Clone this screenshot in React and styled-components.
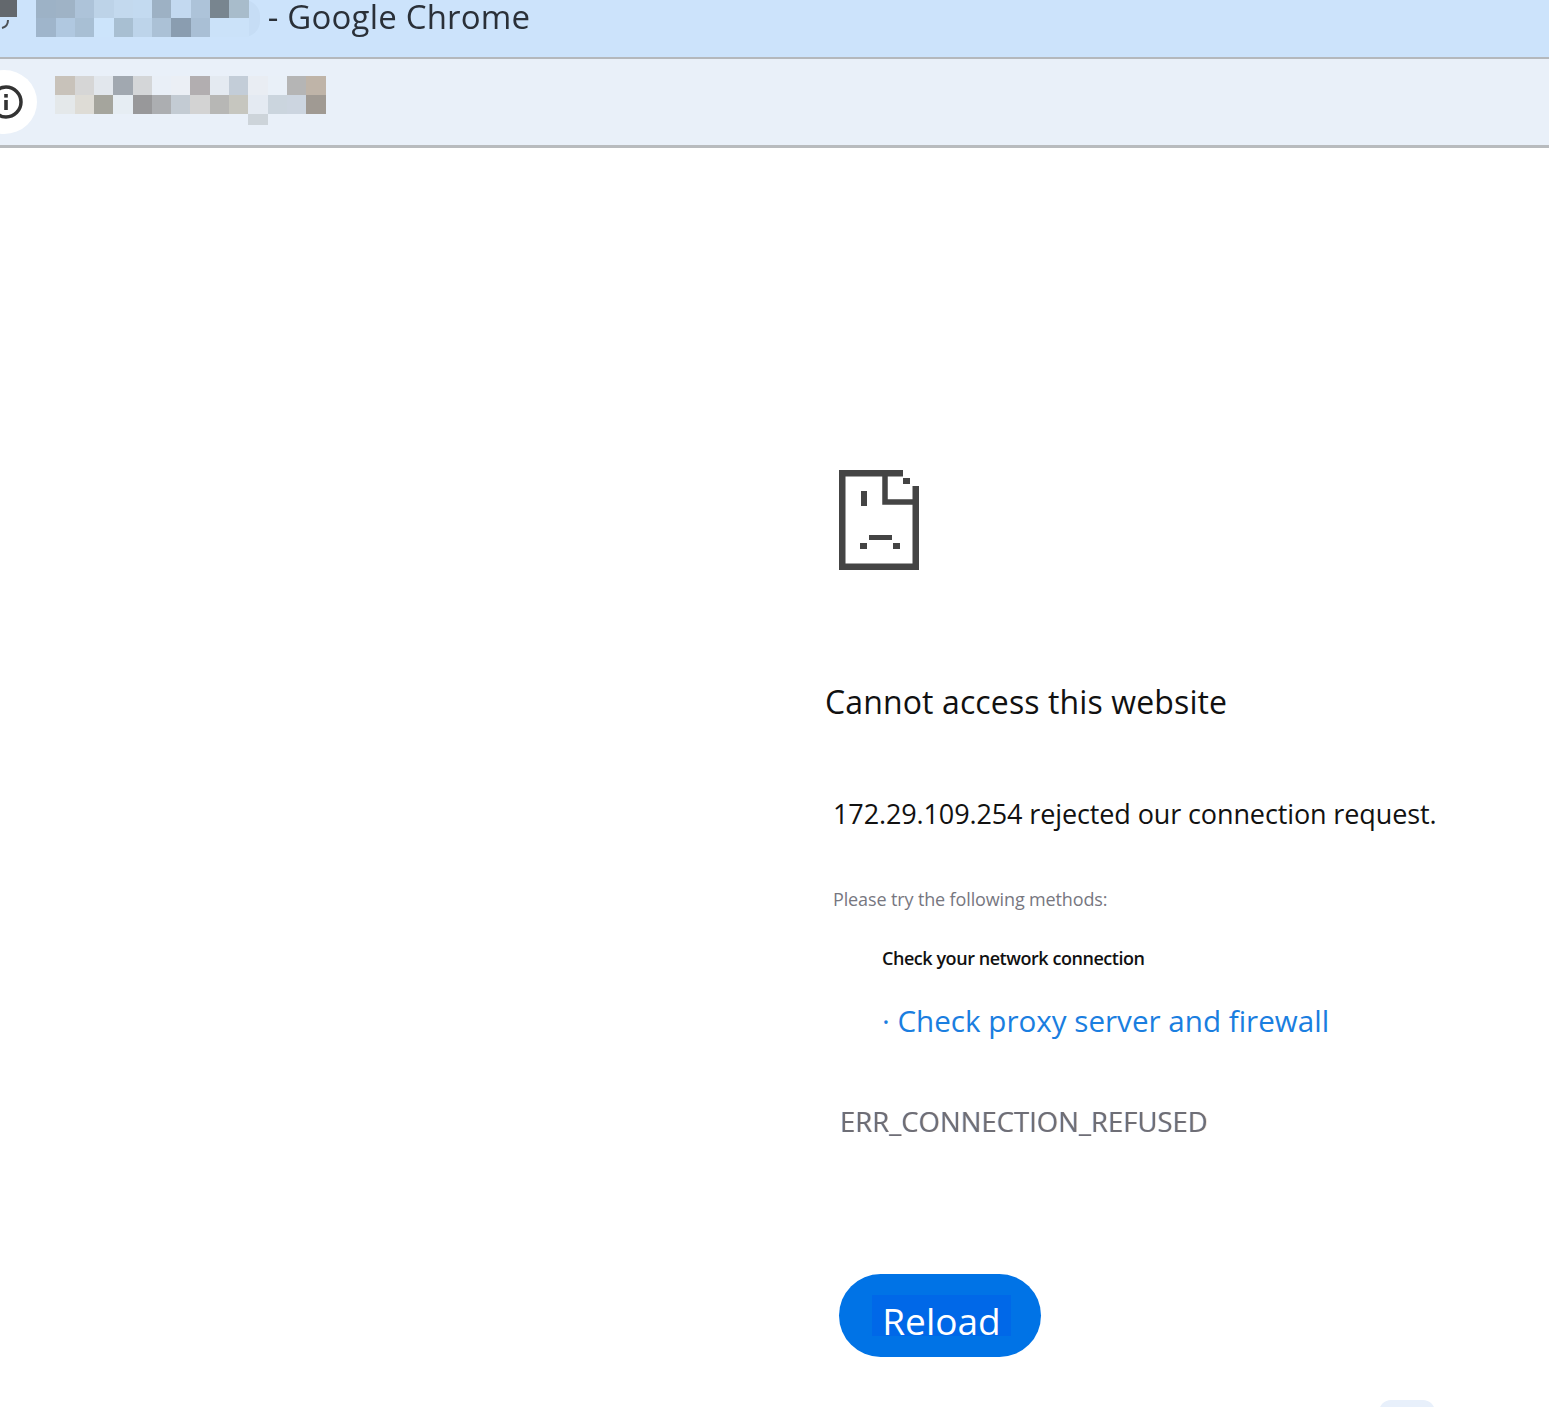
import React from "react";
import styled, { createGlobalStyle } from "styled-components";

const titleCells = [
  ["#9db2c6", "#9fb3c6", "#adc3d9", "#bdd3e8", "#c3d9ee", "#c3daf0", "#9db1c4", "#c3d9f0", "#adc3d9", "#78858f", "#a8bccb"],
  ["#9fb5cb", "#b0c8e0", "#a8bfd4", "#cce4fb", "#a8bfd2", "#bdd4ea", "#abc1d6", "#8a9db0", "#a9bfd5", "#cbe2f9", "#cbe2f9"],
];

const urlCells = [
  ["#c8c2ba", "#d6d6d6", "#e2e7ed", "#a1a8b0", "#d4d6d8", "#e9eff7", "#ebeff5", "#b2aeb0", "#e4eaf1", "#c3cdd8", "#e9edf3", "#e9f0f8", "#b5b5b5", "#bfb4a8"],
  ["#e4e8ea", "#dedcd6", "#a5a59d", "#e6edf3", "#98989a", "#acaeb1", "#c3cbd3", "#d3d3d3", "#b7b7b5", "#c6c6bf", "#e4eaf2", "#cbd5de", "#ccd5e0", "#a09a93"],
  ["transparent", "transparent", "transparent", "transparent", "transparent", "transparent", "transparent", "transparent", "transparent", "transparent", "#cdd4da"],
];

const GlobalStyle = createGlobalStyle`
  html, body {
    margin: 0;
    padding: 0;
    background: #fff;
  }
  body {
    font-family: "Open Sans", "Noto Sans", sans-serif;
  }
`;

const Page = styled.div`
  width: 1549px;
  height: 1407px;
  overflow: hidden;
  background: #fff;
`;

const TitleBar = styled.header`
  height: 57px;
  display: flex;
  align-items: flex-start;
  background: #cce3fb;
  border-bottom: 2px solid #b4b8bc;
`;

const Favicon = styled.svg`
  display: block;
  flex: none;
  filter: blur(0.5px);
`;

const Mosaic = styled.div`
  display: grid;
  grid-template-columns: repeat(${(p) => p.$cols}, 19.3px);
  grid-template-rows: ${(p) => p.$rows};
  flex: none;
  filter: blur(0.4px);
`;

const Cell = styled.span`
  display: block;
`;

const TitleMosaic = styled(Mosaic)`
  margin-left: 19.4px;
  padding-right: 11px;
  background: #c6ddf5;
  border-radius: 0 16px 16px 0;
`;

const TitleText = styled.div`
  margin-left: 8px;
  font-size: 33px;
  line-height: 34px;
  font-weight: 500;
  letter-spacing: 0.2px;
  color: #2a3038;
  white-space: nowrap;
  filter: blur(0.4px);
`;

const Toolbar = styled.div`
  height: 86px;
  display: flex;
  align-items: flex-start;
  background: #e9f0f9;
  border-bottom: 3px solid #b8bbbe;
`;

const InfoChip = styled.div`
  width: 66px;
  height: 64px;
  margin: 11px 0 0 -29px;
  border-radius: 50%;
  background: #fff;
  flex: none;
  display: flex;
  align-items: center;
  justify-content: center;
`;

const InfoIcon = styled.svg`
  display: block;
  margin-left: 4px;
  filter: blur(0.5px);
`;

const UrlMosaic = styled(Mosaic)`
  margin: 17px 0 0 18.4px;
`;

const Main = styled.main`
  margin-left: 825px;
  display: flex;
  flex-direction: column;
  align-items: flex-start;
`;

const ErrorIcon = styled.svg`
  display: block;
  margin: 322px 0 0 14px;
  filter: blur(0.7px);
`;

const Heading = styled.h1`
  margin: 110px 0 0;
  font-size: 32px;
  line-height: 44px;
  font-weight: 400;
  letter-spacing: 0.12px;
  color: #111;
  white-space: nowrap;
`;

const Summary = styled.p`
  margin: 71px 0 0 8px;
  font-size: 27px;
  line-height: 38px;
  font-weight: 500;
  letter-spacing: -0.12px;
  color: #111;
  white-space: nowrap;
`;

const Hint = styled.p`
  margin: 53px 0 0 8px;
  font-size: 18px;
  line-height: 26px;
  font-weight: 500;
  letter-spacing: -0.13px;
  color: #77777f;
  white-space: nowrap;
`;

const Steps = styled.ul`
  margin: 33px 0 0 57px;
  padding: 0;
  list-style: none;
`;

const Step = styled.li`
  font-size: 18px;
  line-height: 26px;
  font-weight: 600;
  letter-spacing: -0.45px;
  color: #111;
  white-space: nowrap;
`;

const ProxyStep = styled.a`
  display: block;
  margin-top: 28px;
  font-size: 29.6px;
  line-height: 44px;
  color: #1a7ee0;
  white-space: nowrap;
`;

const ErrorCode = styled.div`
  margin: 60px 0 0 15px;
  font-size: 27.5px;
  line-height: 38px;
  color: #6e6e76;
  white-space: nowrap;
  text-shadow: 0.6px 0 0 rgba(190, 150, 110, 0.35), -0.6px 0 0 rgba(90, 130, 200, 0.35);
  filter: blur(0.5px);
`;

const ReloadButton = styled.button`
  width: 202px;
  height: 83px;
  margin: 133px 0 0 14px;
  padding: 0;
  border: 0;
  border-radius: 42px;
  background: #0073e6;
  display: flex;
  align-items: center;
  justify-content: center;
  font-family: inherit;
`;

const ReloadLabel = styled.span`
  width: 139px;
  height: 41px;
  margin: 0 0 0 3px;
  background: #0068e8;
  color: #fff;
  font-size: 37px;
  line-height: 51px;
  text-align: center;
  white-space: nowrap;
`;

const CornerBit = styled.div`
  width: 56px;
  height: 12px;
  margin: 43px 0 0 554px;
  border-radius: 12px 12px 0 0;
  background: #e8f0fb;
`;

function Pixels({ rows, Grid, cols, rowSizes }) {
  return (
    <Grid $cols={cols} $rows={rowSizes}>
      {rows.flat().map((c, i) => (
        <Cell key={i} style={{ background: c }} />
      ))}
    </Grid>
  );
}

export default function App() {
  return (
    <Page>
      <GlobalStyle />
      <TitleBar>
        <Favicon width="17" height="32" viewBox="0 0 17 32" fill="none">
          <rect width="17" height="17" fill="#63686d" />
          <path d="M2 28C6 27 8 24 8 20" stroke="#4c5156" strokeWidth="2" />
        </Favicon>
        <Pixels rows={titleCells} Grid={TitleMosaic} cols={11} rowSizes="18px 19px" />
        <TitleText>- Google Chrome</TitleText>
      </TitleBar>
      <Toolbar>
        <InfoChip>
          <InfoIcon width="36" height="36" viewBox="0 0 36 36">
            <circle cx="18" cy="18" r="15" fill="none" stroke="#333" strokeWidth="3.5" />
            <rect x="16.2" y="10" width="3.6" height="3.6" fill="#333" />
            <rect x="16.2" y="16" width="3.6" height="10" fill="#333" />
          </InfoIcon>
        </InfoChip>
        <Pixels rows={urlCells} Grid={UrlMosaic} cols={14} rowSizes="19px 19px 11px" />
      </Toolbar>
      <Main>
        <ErrorIcon width="80" height="100" viewBox="0 0 80 100" fill="none">
          <path d="M64 3H3V97H77V16" stroke="#444" strokeWidth="7" />
          <path d="M46 3V32H77" stroke="#444" strokeWidth="5.5" />
          <rect x="64" y="8" width="7" height="6" fill="#444" />
          <rect x="22" y="21" width="6" height="15" fill="#444" />
          <rect x="30" y="65" width="23" height="5" fill="#444" />
          <rect x="21" y="73" width="7" height="6" fill="#444" />
          <rect x="54" y="73" width="7" height="6" fill="#444" />
        </ErrorIcon>
        <Heading>Cannot access this website</Heading>
        <Summary>172.29.109.254 rejected our connection request.</Summary>
        <Hint>Please try the following methods:</Hint>
        <Steps>
          <Step>Check your network connection</Step>
          <li>
            <ProxyStep>· Check proxy server and firewall</ProxyStep>
          </li>
        </Steps>
        <ErrorCode>ERR_CONNECTION_REFUSED</ErrorCode>
        <ReloadButton>
          <ReloadLabel>Reload</ReloadLabel>
        </ReloadButton>
        <CornerBit />
      </Main>
    </Page>
  );
}
